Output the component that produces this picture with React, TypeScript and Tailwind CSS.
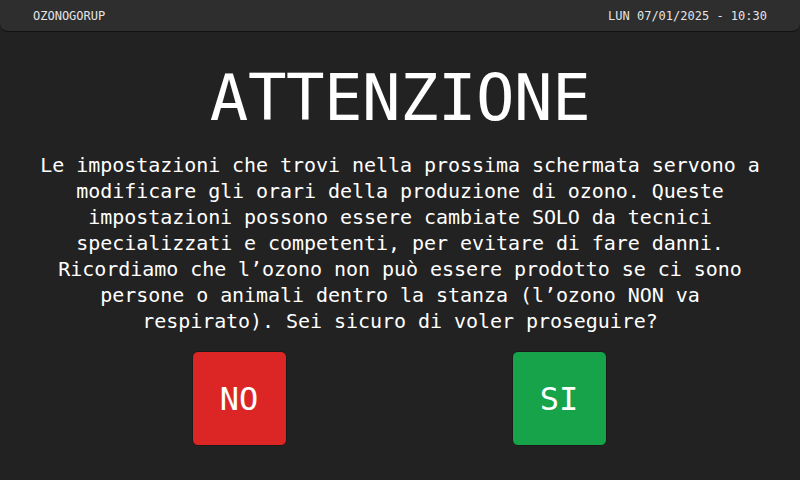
export default function App() {
  return (
    <div
      className="w-[800px] h-[480px] bg-[#222222] text-white flex flex-col overflow-hidden"
      style={{ fontFamily: '"DejaVu Sans Mono", "Liberation Mono", monospace' }}
    >
      {/* Top bar */}
      <div className="h-[32px] shrink-0 bg-[#2e2e2e] rounded-b-[8px] border-b border-[#111111] flex items-center justify-between px-[33px] text-[12px] text-[#e5e5e5]">
        <span>OZONOGORUP</span>
        <span>LUN 07/01/2025 - 10:30</span>
      </div>

      <div className="flex flex-col items-center">
        <h1 className="mt-[34px] text-[64px] leading-[64px] tracking-[-0.5px]">ATTENZIONE</h1>
        <p className="mt-[22px] w-[740px] text-center text-[20px] leading-[26px] tracking-[-0.05px]">
          Le impostazioni che trovi nella prossima schermata servono a modificare gli orari della
          produzione di ozono. Queste impostazioni possono essere cambiate SOLO da tecnici
          specializzati e competenti, per evitare di fare danni. Ricordiamo che l’ozono non può
          essere prodotto se ci sono persone o animali dentro la stanza (l’ozono NON va respirato).
          Sei sicuro di voler proseguire?
        </p>
        <div className="mt-[17px] flex gap-[225px] -translate-x-[1px]">
          <button className="w-[95px] h-[95px] rounded-[6px] bg-[#dc2626] border border-[#1a1a1a] text-[32px] text-white">
            NO
          </button>
          <button className="w-[95px] h-[95px] rounded-[6px] bg-[#16a34a] border border-[#1a1a1a] text-[32px] text-white">
            SI
          </button>
        </div>
      </div>
    </div>
  );
}
